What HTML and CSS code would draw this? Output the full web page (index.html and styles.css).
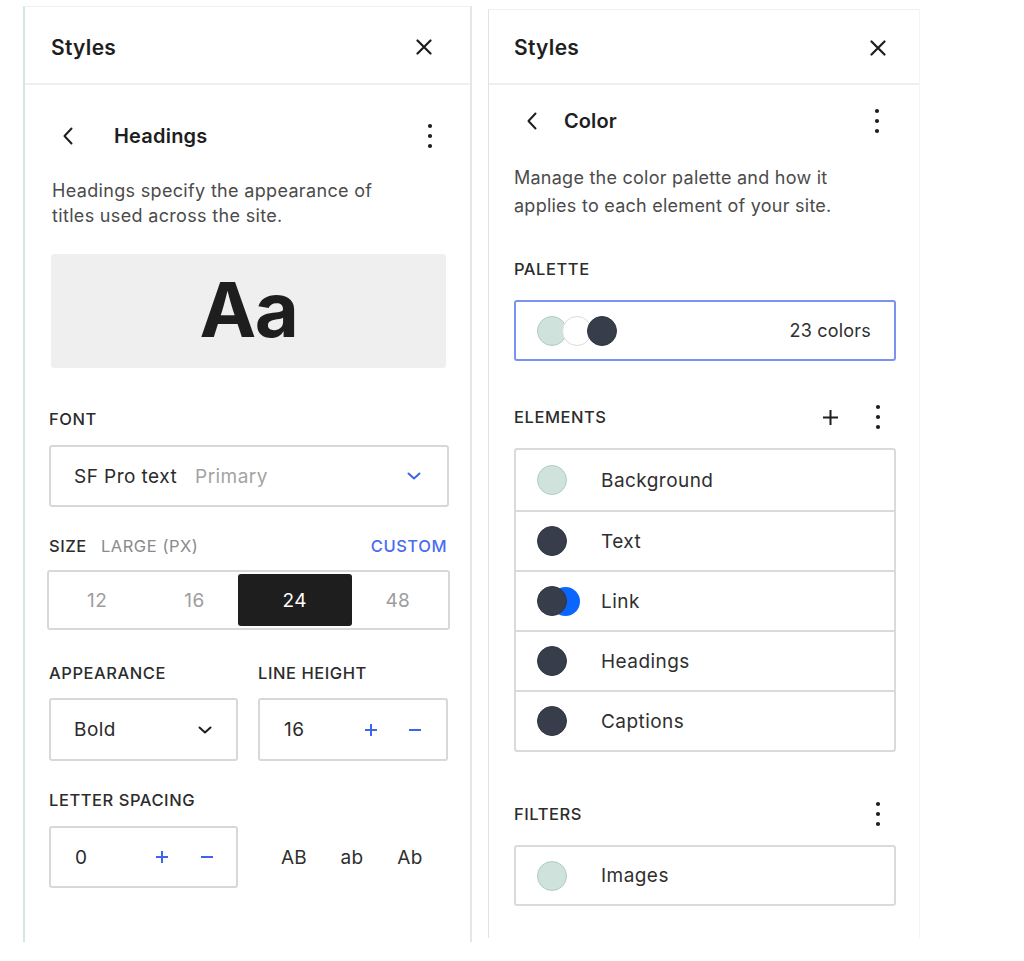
FILE: index.html
```html
<!DOCTYPE html>
<html lang="en">
<head>
<meta charset="utf-8">
<title>Styles</title>
<link rel="stylesheet" href="styles.css">
</head>
<body>
<div class="stage">
  <section class="panel panel-left">
    <header class="panel-head">
      <h1 class="panel-title">Styles</h1>
      <svg class="icon-close" width="16" height="16" viewBox="0 0 16 16"><path d="M1.5 1.5 L14.5 14.5 M14.5 1.5 L1.5 14.5" stroke="#1e1e1e" stroke-width="2.2" stroke-linecap="round" fill="none"/></svg>
    </header>
    <div class="panel-body">
      <div class="nav-row">
        <svg class="icon-back" width="12" height="18" viewBox="0 0 12 18"><path d="M9.5 1.5 L2.5 9 L9.5 16.5" stroke="#1e1e1e" stroke-width="2" stroke-linecap="round" stroke-linejoin="round" fill="none"/></svg>
        <h2 class="nav-title nav-title-wide">Headings</h2>
        <svg class="icon-kebab" width="6" height="26" viewBox="0 0 6 26"><circle cx="3" cy="3" r="2.1" fill="#1e1e1e"/><circle cx="3" cy="13" r="2.1" fill="#1e1e1e"/><circle cx="3" cy="23" r="2.1" fill="#1e1e1e"/></svg>
      </div>
      <p class="desc desc-left">Headings specify the appearance of<br>titles used across the site.</p>
      <div class="preview">Aa</div>

      <div class="label label-font">FONT</div>
      <div class="field select-font">
        <span class="field-value">SF Pro text</span>
        <span class="field-muted">Primary</span>
        <svg class="chev chev-blue" width="14" height="8" viewBox="0 0 14 8"><path d="M1.5 1.5 L7 6.5 L12.5 1.5" stroke="#3b64f0" stroke-width="2" stroke-linecap="round" stroke-linejoin="round" fill="none"/></svg>
      </div>

      <div class="label-row size-row">
        <span class="label">SIZE</span>
        <span class="label label-muted">LARGE (PX)</span>
        <span class="label label-link">CUSTOM</span>
      </div>
      <div class="segmented">
        <span class="seg">12</span>
        <span class="seg">16</span>
        <span class="seg seg-on">24</span>
        <span class="seg">48</span>
      </div>

      <div class="pair pair-labels">
        <span class="label">APPEARANCE</span>
        <span class="label">LINE HEIGHT</span>
      </div>
      <div class="pair pair-fields">
        <div class="field select-weight">
          <span class="field-value">Bold</span>
          <svg class="chev" width="14" height="8" viewBox="0 0 14 8"><path d="M1.5 1.5 L7 6.5 L12.5 1.5" stroke="#1e1e1e" stroke-width="2" stroke-linecap="round" stroke-linejoin="round" fill="none"/></svg>
        </div>
        <div class="field stepper stepper-lh">
          <span class="field-value">16</span>
          <svg class="step-plus" width="14" height="14" viewBox="0 0 14 14"><path d="M7 1 V13 M1 7 H13" stroke="#3b64f0" stroke-width="2" fill="none"/></svg>
          <svg class="step-minus" width="14" height="14" viewBox="0 0 14 14"><path d="M1 7 H13" stroke="#3b64f0" stroke-width="2" fill="none"/></svg>
        </div>
      </div>

      <div class="label label-ls">LETTER SPACING</div>
      <div class="ls-row">
        <div class="field stepper stepper-ls">
          <span class="field-value">0</span>
          <svg class="step-plus" width="14" height="14" viewBox="0 0 14 14"><path d="M7 1 V13 M1 7 H13" stroke="#3b64f0" stroke-width="2" fill="none"/></svg>
          <svg class="step-minus" width="14" height="14" viewBox="0 0 14 14"><path d="M1 7 H13" stroke="#3b64f0" stroke-width="2" fill="none"/></svg>
        </div>
        <div class="case-set">
          <span class="case">AB</span>
          <span class="case">ab</span>
          <span class="case">Ab</span>
        </div>
      </div>
    </div>
  </section>

  <section class="panel panel-right">
    <header class="panel-head">
      <h1 class="panel-title">Styles</h1>
      <svg class="icon-close" width="16" height="16" viewBox="0 0 16 16"><path d="M1.5 1.5 L14.5 14.5 M14.5 1.5 L1.5 14.5" stroke="#1e1e1e" stroke-width="2.2" stroke-linecap="round" fill="none"/></svg>
    </header>
    <div class="panel-body">
      <div class="nav-row nav-row-color">
        <svg class="icon-back" width="12" height="18" viewBox="0 0 12 18"><path d="M9.5 1.5 L2.5 9 L9.5 16.5" stroke="#1e1e1e" stroke-width="2" stroke-linecap="round" stroke-linejoin="round" fill="none"/></svg>
        <h2 class="nav-title">Color</h2>
        <svg class="icon-kebab" width="6" height="26" viewBox="0 0 6 26"><circle cx="3" cy="3" r="2.1" fill="#1e1e1e"/><circle cx="3" cy="13" r="2.1" fill="#1e1e1e"/><circle cx="3" cy="23" r="2.1" fill="#1e1e1e"/></svg>
      </div>
      <p class="desc desc-right">Manage the color palette and how it<br>applies to each element of your site.</p>

      <div class="label label-palette">PALETTE</div>
      <div class="palette">
        <span class="swatches">
          <span class="dot dot-green"></span>
          <span class="dot dot-white"></span>
          <span class="dot dot-dark"></span>
        </span>
        <span class="palette-count">23 colors</span>
      </div>

      <div class="section-row section-elements">
        <span class="label">ELEMENTS</span>
        <svg class="icon-plus" width="17" height="17" viewBox="0 0 17 17"><path d="M8.5 1 V16 M1 8.5 H16" stroke="#1e1e1e" stroke-width="2" fill="none"/></svg>
        <svg class="icon-kebab" width="6" height="26" viewBox="0 0 6 26"><circle cx="3" cy="3" r="2.1" fill="#1e1e1e"/><circle cx="3" cy="13" r="2.1" fill="#1e1e1e"/><circle cx="3" cy="23" r="2.1" fill="#1e1e1e"/></svg>
      </div>
      <ul class="list">
        <li class="item"><span class="dot dot-green"></span><span class="item-name">Background</span></li>
        <li class="item"><span class="dot dot-dark"></span><span class="item-name">Text</span></li>
        <li class="item"><span class="duo"><span class="dot dot-blue"></span><span class="dot dot-dark dot-front"></span></span><span class="item-name">Link</span></li>
        <li class="item"><span class="dot dot-dark"></span><span class="item-name">Headings</span></li>
        <li class="item"><span class="dot dot-dark"></span><span class="item-name">Captions</span></li>
      </ul>

      <div class="section-row section-filters">
        <span class="label">FILTERS</span>
        <svg class="icon-kebab" width="6" height="26" viewBox="0 0 6 26"><circle cx="3" cy="3" r="2.1" fill="#1e1e1e"/><circle cx="3" cy="13" r="2.1" fill="#1e1e1e"/><circle cx="3" cy="23" r="2.1" fill="#1e1e1e"/></svg>
      </div>
      <ul class="list list-filters">
        <li class="item"><span class="dot dot-green"></span><span class="item-name">Images</span></li>
      </ul>
    </div>
  </section>
</div>
</body>
</html>
```

FILE: styles.css
```css
* { box-sizing: border-box; }

html, body {
  margin: 0;
  padding: 0;
  background: #ffffff;
}

body {
  font-family: Inter, "Noto Sans", "Liberation Sans", sans-serif;
  color: #1e1e1e;
  width: 1024px;
  height: 961px;
  overflow: hidden;
}

.stage {
  display: flex;
  align-items: flex-start;
}

.panel {
  display: flex;
  flex-direction: column;
  background: #fff;
}

.panel-left {
  margin-left: 23px;
  margin-top: 6px;
  width: 449px;
  height: 936px;
  border-left: 2px solid #d5e6df;
  border-top: 1px solid #eef1ef;
  border-right: 2px solid #e6e6e6;
}

.panel-right {
  margin-left: 16px;
  margin-top: 9px;
  width: 432px;
  height: 929px;
  border-left: 1.5px solid #e2e2e2;
  border-top: 1px solid #f0f0f0;
  border-right: 1px solid #f4f4f4;
}

/* header */
.panel-head {
  display: flex;
  align-items: center;
  justify-content: space-between;
  height: 78px;
  padding-top: 4px;
  border-bottom: 2px solid #efefef;
}

.panel-left .panel-head {
  padding-left: 26px;
  padding-right: 38px;
}

.panel-right .panel-head {
  height: 75px;
  padding-top: 2px;
  padding-left: 25px;
  padding-right: 33px;
}

.panel-title {
  margin: 0;
  font-size: 21px;
  font-weight: 600;
  letter-spacing: 0.3px;
  color: #1e1e1e;
}

.icon-close { display: block; }

/* body */
.panel-body {
  display: flex;
  flex-direction: column;
}

.panel-left .panel-body {
  padding: 0 21px 0 24px;
}

.panel-right .panel-body {
  padding: 0 23px 0 25px;
}

.nav-row {
  display: flex;
  align-items: center;
  height: 40px;
  margin-top: 31px;
}

.panel-left .nav-row { padding-left: 13px; padding-right: 16px; }

.nav-row .icon-back { display: block; flex: none; }

.nav-title {
  margin: 0;
  font-size: 20px;
  font-weight: 600;
  letter-spacing: 0.2px;
  color: #1e1e1e;
  flex: 1;
}

.nav-title-wide { padding-left: 40px; }

.nav-row-color {
  margin-top: 16px;
  padding-left: 12px;
  padding-right: 16px;
}

.nav-row-color .nav-title { padding-left: 26px; letter-spacing: 0.1px; }

.icon-kebab { display: block; flex: none; }

.desc {
  margin: 22px 0 0 3px;
  font-size: 18px;
  letter-spacing: 0.33px;
  line-height: 25px;
  color: #4b4b4b;
}

.desc-right {
  margin: 23px 0 0 0;
  line-height: 28px;
  letter-spacing: 0.25px;
}

.preview {
  margin: 26px 3px 0 2px;
  height: 114px;
  background: #efefef;
  border-radius: 3px;
  display: flex;
  align-items: center;
  justify-content: center;
  font-size: 76px;
  font-weight: 700;
  letter-spacing: -1.5px;
  color: #1e1e1e;
  line-height: 1;
  padding-bottom: 4px;
}

/* labels */
.label {
  font-size: 16.5px;
  font-weight: 500;
  line-height: 20px;
  letter-spacing: 0.55px;
  color: #2c2c2c;
  text-transform: uppercase;
}

.label-font { margin-top: 41px; }

.label-muted { color: #8a8a8a; font-weight: 400; margin-left: 14px; }
.label-link { color: #4a6cf0; margin-left: auto; margin-right: 2px; }

.label-row {
  display: flex;
  align-items: center;
  height: 20px;
}

.size-row { margin-top: 29px; }

/* fields */
.field {
  display: flex;
  align-items: center;
  border: 2px solid #d8d8d8;
  border-radius: 3px;
  background: #fff;
  font-size: 19px;
  letter-spacing: 0.45px;
  color: #2a2a2a;
}

.select-font {
  margin-top: 16px;
  height: 62px;
  padding: 0 26px 0 23px;
}

.field-muted {
  color: #a3a3a3;
  margin-left: 18px;
}

.chev { display: block; margin-left: auto; flex: none; }

.segmented {
  margin: 14px -1px 0 -2px;
  height: 60px;
  border: 2px solid #d8d8d8;
  border-radius: 3px;
  padding: 2px 4px;
  display: grid;
  grid-template-columns: 1fr 1fr 114px 1fr;
  align-items: stretch;
}

.seg {
  display: flex;
  align-items: center;
  justify-content: center;
  font-size: 19px;
  letter-spacing: 0.4px;
  color: #9d9d9d;
}

.seg:first-child { padding-right: 4px; }
.seg:nth-child(2) { padding-left: 6px; }

.seg-on {
  background: #1e1e1e;
  color: #fff;
  border-radius: 3px;
}

.pair {
  display: grid;
  grid-template-columns: 189px 190px;
  column-gap: 20px;
}

.pair-labels { margin-top: 33px; }

.pair-fields { margin-top: 15px; }

.pair-fields .field { height: 63px; }

.select-weight { padding: 0 24px 0 23px; }

.stepper .field-value { flex: 1; }

.stepper-lh { padding: 0 24px 0 24px; }
.stepper-lh .step-minus { margin-left: 30px; }

.step-plus, .step-minus { display: block; flex: none; }

.label-ls { margin-top: 29px; }

.ls-row {
  display: flex;
  align-items: center;
  margin-top: 16px;
}

.stepper-ls {
  width: 189px;
  height: 62px;
  padding: 0 22px 0 24px;
}

.stepper-ls .step-minus { margin-left: 31px; }

.case-set {
  display: flex;
  margin-left: 27px;
}

.case {
  width: 58px;
  text-align: center;
  font-size: 19px;
  letter-spacing: 0.3px;
  color: #2f2f2f;
}

/* right panel */
.label-palette { margin-top: 39px; }

.palette {
  margin-top: 21px;
  height: 61px;
  border: 2px solid #7b93f0;
  border-radius: 3px;
  display: flex;
  align-items: center;
  padding: 0 23px 0 21px;
}

.swatches { display: flex; align-items: center; }

.swatches .dot + .dot { margin-left: -5px; }

.dot {
  display: block;
  width: 30px;
  height: 30px;
  border-radius: 50%;
  flex: none;
}

.dot-green { background: #cfe3dc; border: 1.5px solid #aecbbf; }
.dot-white { background: #ffffff; border: 1.5px solid #dcdcdc; }
.dot-dark { background: #373d4a; border: 1px solid #2f3440; }
.dot-blue { background: #0a66ff; }

.palette-count {
  margin-left: auto;
  font-size: 18px;
  letter-spacing: 0.2px;
  color: #2f2f2f;
}

.section-row {
  display: flex;
  align-items: center;
  height: 40px;
}

.section-row .label { flex: 1; }

.section-elements { margin-top: 36px; padding-right: 15px; }
.section-elements .icon-plus { display: block; margin-right: 36px; }

.section-filters { margin-top: 42px; padding-right: 15px; }

.list {
  list-style: none;
  margin: 11px 0 0 0;
  padding: 0;
  border: 2px solid #dadada;
  border-radius: 3px;
}

.item {
  display: flex;
  align-items: center;
  height: 60px;
  padding-left: 21px;
  font-size: 19px;
  letter-spacing: 0.45px;
  color: #2f2f2f;
}

.item + .item { border-top: 2px solid #dadada; }

.item-name { margin-left: 34px; }

.duo {
  display: flex;
  width: 30px;
  position: relative;
  height: 30px;
}

.duo .dot-blue {
  position: absolute;
  left: 14px;
  top: 1px;
  width: 29px;
  height: 29px;
}

.duo .dot-front { position: relative; }

.list-filters .item { height: 57px; }
```
